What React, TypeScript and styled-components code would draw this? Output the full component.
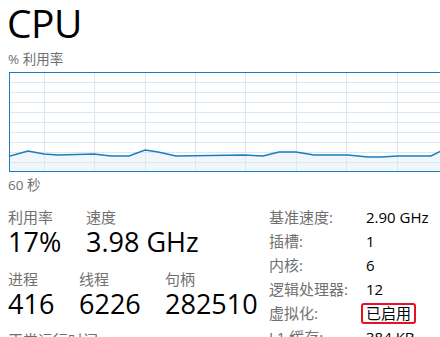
import { createGlobalStyle } from "styled-components";
import styled from "styled-components";

const GlobalStyle = createGlobalStyle`
  html, body {
    margin: 0;
    padding: 0;
    background: #ffffff;
  }
  body {
    font-family: "Open Sans", "Noto Sans CJK SC", sans-serif;
    color: #000000;
  }
`;

const Page = styled.div`
  width: 440px;
  height: 337px;
  overflow: hidden;
  padding-left: 8px;
  box-sizing: border-box;
  display: flex;
  flex-direction: column;

  & > * {
    flex-shrink: 0;
  }
`;

const Title = styled.h1`
  margin: 0 0 0 -1px;
  font-weight: 400;
  font-size: 39px;
  line-height: 46px;
  letter-spacing: -0.5px;
`;

const Caption = styled.div<{ $top?: number }>`
  color: #707070;
  font-size: 13.5px;
  line-height: 16px;
  margin-top: ${(p) => p.$top ?? 0}px;
`;

const GraphBox = styled.div`
  margin-top: 5px;
  margin-left: 1px;
  height: 100px;
  width: 440px;
  box-sizing: border-box;
  border: 1px solid #1a7dbf;
  border-right: none;
  overflow: hidden;
  background: #ffffff;
`;

const Stats = styled.div`
  display: grid;
  grid-template-columns: 261px 1fr;
  margin-top: 15px;
`;

const StatCol = styled.div`
  display: flex;
  flex-direction: column;
`;

const StatRow = styled.div<{ $top?: number }>`
  display: flex;
  margin-top: ${(p) => p.$top ?? 0}px;
`;

const Stat = styled.div<{ $w: number }>`
  width: ${(p) => p.$w}px;
  display: flex;
  flex-direction: column;
`;

const StatLabel = styled.div`
  color: #707070;
  font-size: 15px;
  line-height: 18px;
`;

const StatValue = styled.div`
  font-size: 27px;
  line-height: 32px;
`;

const Details = styled.div`
  display: grid;
  grid-template-columns: 97px auto;
  grid-auto-rows: 24px;
  align-items: center;
  justify-items: start;
  margin-top: -3px;
`;

const DetailLabel = styled.div`
  color: #707070;
  font-size: 15px;
  line-height: 18px;
`;

const DetailValue = styled.div<{ $boxed?: boolean }>`
  font-size: 15px;
  line-height: ${(p) => (p.$boxed ? 17 : 18)}px;
  padding: 0 ${(p) => (p.$boxed ? 3 : 0)}px;
  margin-left: ${(p) => (p.$boxed ? -5 : 0)}px;
  border: ${(p) => (p.$boxed ? "2px solid #e81123" : "none")};
  border-radius: ${(p) => (p.$boxed ? 3 : 0)}px;
`;

const points: [number, number][] = [
  [0, 83], [18, 78], [34, 81], [48, 82], [84, 81], [101, 83], [119, 83],
  [135, 77], [148, 79], [166, 83], [234, 82], [253, 83], [269, 79],
  [286, 79], [304, 82], [338, 82], [358, 84], [371, 84], [388, 83],
  [421, 83], [431, 78],
];

const UsageGraph = () => {
  const line = points.map(([x, y]) => `${x},${y}`).join(" ");
  const area = `0,100 ${line} 431,100`;
  const vLines = [34, 84, 135, 185, 235, 286, 336, 387];
  const hLines = [9, 19, 29, 39, 49, 59, 69, 79, 89];
  return (
    <svg width="431" height="98" viewBox="0 0 431 98" style={{ display: "block" }}>
      <polygon points={area} fill="#f1f6fa" />
      {hLines.map((y) => (
        <line key={"h" + y} x1="0" x2="431" y1={y + 0.5} y2={y + 0.5} stroke="#d9e9f4" strokeWidth="1" />
      ))}
      {vLines.map((x) => (
        <line key={"v" + x} x1={x + 0.5} x2={x + 0.5} y1="0" y2="98" stroke="#d9e9f4" strokeWidth="1" />
      ))}
      <polyline points={line} fill="none" stroke="#1a7dbf" strokeWidth="1.4" />
    </svg>
  );
};

const details: [string, string, boolean?][] = [
  ["基准速度:", "2.90 GHz"],
  ["插槽:", "1"],
  ["内核:", "6"],
  ["逻辑处理器:", "12"],
  ["虚拟化:", "已启用", true],
  ["L1 缓存:", "384 KB"],
];

const App = () => {
  return (
    <Page>
      <GlobalStyle />
      <Title>CPU</Title>
      <Caption $top={5}>% 利用率</Caption>
      <GraphBox>
        <UsageGraph />
      </GraphBox>
      <Caption $top={5}>60 秒</Caption>
      <Stats>
        <StatCol>
          <StatRow>
            <Stat $w={78}>
              <StatLabel>利用率</StatLabel>
              <StatValue>17%</StatValue>
            </Stat>
            <Stat $w={120}>
              <StatLabel>速度</StatLabel>
              <StatValue>3.98 GHz</StatValue>
            </Stat>
          </StatRow>
          <StatRow $top={12}>
            <Stat $w={71}>
              <StatLabel>进程</StatLabel>
              <StatValue>416</StatValue>
            </Stat>
            <Stat $w={86}>
              <StatLabel>线程</StatLabel>
              <StatValue>6226</StatValue>
            </Stat>
            <Stat $w={100}>
              <StatLabel>句柄</StatLabel>
              <StatValue>282510</StatValue>
            </Stat>
          </StatRow>
          <StatRow $top={11}>
            <Stat $w={200}>
              <StatLabel>正常运行时间</StatLabel>
              <StatValue>0:05:12:33</StatValue>
            </Stat>
          </StatRow>
        </StatCol>
        <Details>
          {details.map(([label, value, boxed]) => (
            <>
              <DetailLabel key={label}>{label}</DetailLabel>
              <DetailValue key={label + "v"} $boxed={boxed}>
                {value}
              </DetailValue>
            </>
          ))}
        </Details>
      </Stats>
    </Page>
  );
};

export default App;
